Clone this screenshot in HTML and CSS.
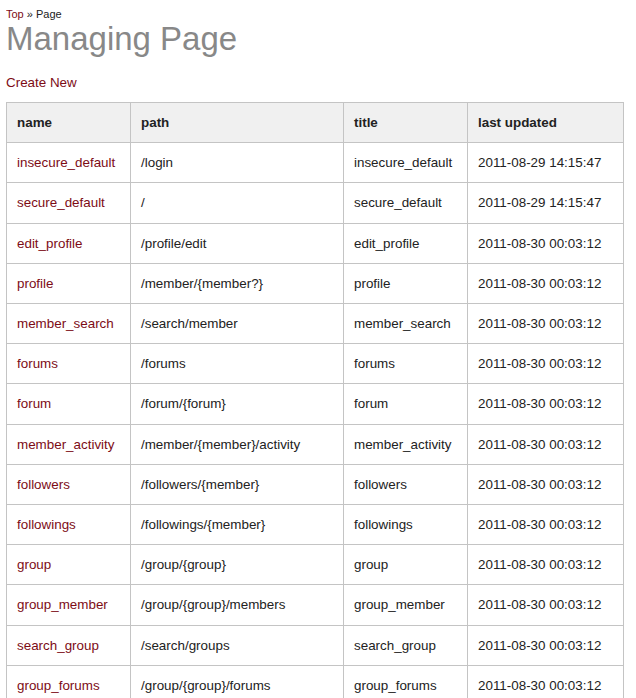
FILE: index.html
```html
<!DOCTYPE html>
<html>
<head>
<meta charset="utf-8">
<link rel="stylesheet" href="styles.css">
</head>
<body>
<div class="crumbs"><a href="#">Top</a> » Page</div>
<h1 class="title">Managing Page</h1>
<p class="actions"><a href="#">Create New</a></p>
<table class="pages">
<thead>
<tr><th class="c-name">name</th><th class="c-path">path</th><th class="c-title">title</th><th class="c-date">last updated</th></tr>
</thead>
<tbody>
<tr><td><a href="#">insecure_default</a></td><td>/login</td><td>insecure_default</td><td>2011-08-29 14:15:47</td></tr>
<tr><td><a href="#">secure_default</a></td><td>/</td><td>secure_default</td><td>2011-08-29 14:15:47</td></tr>
<tr><td><a href="#">edit_profile</a></td><td>/profile/edit</td><td>edit_profile</td><td>2011-08-30 00:03:12</td></tr>
<tr><td><a href="#">profile</a></td><td>/member/{member?}</td><td>profile</td><td>2011-08-30 00:03:12</td></tr>
<tr><td><a href="#">member_search</a></td><td>/search/member</td><td>member_search</td><td>2011-08-30 00:03:12</td></tr>
<tr><td><a href="#">forums</a></td><td>/forums</td><td>forums</td><td>2011-08-30 00:03:12</td></tr>
<tr><td><a href="#">forum</a></td><td>/forum/{forum}</td><td>forum</td><td>2011-08-30 00:03:12</td></tr>
<tr><td><a href="#">member_activity</a></td><td>/member/{member}/activity</td><td>member_activity</td><td>2011-08-30 00:03:12</td></tr>
<tr><td><a href="#">followers</a></td><td>/followers/{member}</td><td>followers</td><td>2011-08-30 00:03:12</td></tr>
<tr><td><a href="#">followings</a></td><td>/followings/{member}</td><td>followings</td><td>2011-08-30 00:03:12</td></tr>
<tr><td><a href="#">group</a></td><td>/group/{group}</td><td>group</td><td>2011-08-30 00:03:12</td></tr>
<tr><td><a href="#">group_member</a></td><td>/group/{group}/members</td><td>group_member</td><td>2011-08-30 00:03:12</td></tr>
<tr><td><a href="#">search_group</a></td><td>/search/groups</td><td>search_group</td><td>2011-08-30 00:03:12</td></tr>
<tr><td><a href="#">group_forums</a></td><td>/group/{group}/forums</td><td>group_forums</td><td>2011-08-30 00:03:12</td></tr>
</tbody>
</table>
</body>
</html>
```

FILE: styles.css
```css
body {
  margin: 6px;
  font-family: "Liberation Sans", Arial, sans-serif;
  font-size: 13px;
  color: #222;
  background: #fff;
}
a {
  color: #7d0c16;
  text-decoration: none;
}
.crumbs {
  font-size: 11px;
  line-height: 14px;
  margin-top: 1px;
}
.title {
  margin: 0;
  font-size: 33px;
  font-weight: normal;
  line-height: 36px;
  color: #888;
}
.actions {
  margin: 17px 0 10px;
  line-height: 18px;
  font-size: 13.4px;
}
.pages {
  border-collapse: collapse;
  width: 618px;
  font-size: 13.4px;
}
.pages th, .pages td {
  border: 1px solid #c4c4c4;
  padding: 10px 10px;
  line-height: 19.2px;
  text-align: left;
  white-space: nowrap;
}
.pages th {
  background: #f0f0f0;
  font-weight: bold;
}
.c-name { width: 103px; }
.c-path { width: 192px; }
.c-title { width: 103px; }
.c-date { width: 135px; }
```
